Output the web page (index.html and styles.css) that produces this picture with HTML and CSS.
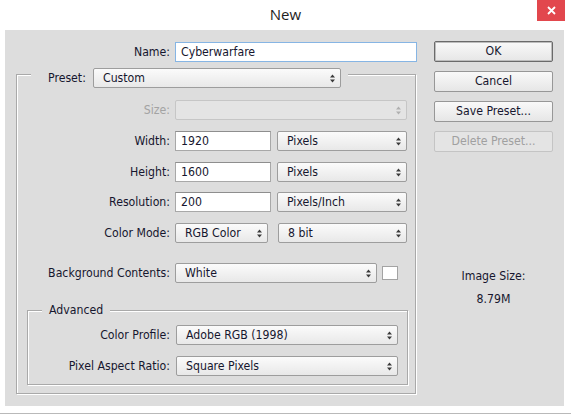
FILE: index.html
```html
<!DOCTYPE html>
<html>
<head>
<meta charset="utf-8">
<title>New</title>
<link rel="stylesheet" href="styles.css">
</head>
<body>
<div class="titlebar">
  <span class="title">New</span>
  <div class="close"><svg width="9" height="9" viewBox="0 0 9 9"><path d="M1 1L8 8M8 1L1 8" stroke="#fff" stroke-width="1.8" fill="none"/></svg></div>
</div>
<div class="dialog">
  <div class="main">
    <div class="namerow">
      <span class="lbl lbl-name">Name:</span>
      <div class="input name">Cyberwarfare</div>
    </div>
    <div class="group">
      <div class="legend preset">
        <span class="lbl">Preset:</span>
        <div class="select w-preset"><span>Custom</span><svg class="arr" width="5" height="9" viewBox="0 0 5 9"><path d="M0 3.5L2.5 0.5L5 3.5ZM0 5.5L5 5.5L2.5 8.5Z"/></svg></div>
      </div>
      <div class="row r-size">
        <span class="lbl dis">Size:</span>
        <div class="select dis w-full"><span></span><svg class="arr" width="5" height="9" viewBox="0 0 5 9"><path d="M0 3.5L2.5 0.5L5 3.5ZM0 5.5L5 5.5L2.5 8.5Z"/></svg></div>
      </div>
      <div class="row r-next">
        <span class="lbl">Width:</span>
        <div class="pair">
          <div class="input w-num">1920</div>
          <div class="select w-unit"><span>Pixels</span><svg class="arr" width="5" height="9" viewBox="0 0 5 9"><path d="M0 3.5L2.5 0.5L5 3.5ZM0 5.5L5 5.5L2.5 8.5Z"/></svg></div>
        </div>
      </div>
      <div class="row r-next">
        <span class="lbl">Height:</span>
        <div class="pair">
          <div class="input w-num">1600</div>
          <div class="select w-unit"><span>Pixels</span><svg class="arr" width="5" height="9" viewBox="0 0 5 9"><path d="M0 3.5L2.5 0.5L5 3.5ZM0 5.5L5 5.5L2.5 8.5Z"/></svg></div>
        </div>
      </div>
      <div class="row r-res">
        <span class="lbl">Resolution:</span>
        <div class="pair">
          <div class="input w-num">200</div>
          <div class="select w-unit"><span>Pixels/Inch</span><svg class="arr" width="5" height="9" viewBox="0 0 5 9"><path d="M0 3.5L2.5 0.5L5 3.5ZM0 5.5L5 5.5L2.5 8.5Z"/></svg></div>
        </div>
      </div>
      <div class="row r-next">
        <span class="lbl">Color Mode:</span>
        <div class="pair pair-cm">
          <div class="select w-mode"><span>RGB Color</span><svg class="arr" width="5" height="9" viewBox="0 0 5 9"><path d="M0 3.5L2.5 0.5L5 3.5ZM0 5.5L5 5.5L2.5 8.5Z"/></svg></div>
          <div class="select w-bit"><span>8 bit</span><svg class="arr" width="5" height="9" viewBox="0 0 5 9"><path d="M0 3.5L2.5 0.5L5 3.5ZM0 5.5L5 5.5L2.5 8.5Z"/></svg></div>
        </div>
      </div>
      <div class="row r-bg">
        <span class="lbl">Background Contents:</span>
        <div class="pair pair-bg">
          <div class="select w-bg"><span>White</span><svg class="arr" width="5" height="9" viewBox="0 0 5 9"><path d="M0 3.5L2.5 0.5L5 3.5ZM0 5.5L5 5.5L2.5 8.5Z"/></svg></div>
          <div class="swatch"></div>
        </div>
      </div>
      <div class="adv">
        <div class="legend adv-legend">Advanced</div>
        <div class="row arow r-cp">
          <span class="lbl">Color Profile:</span>
          <div class="select w-adv"><span>Adobe RGB (1998)</span><svg class="arr" width="5" height="9" viewBox="0 0 5 9"><path d="M0 3.5L2.5 0.5L5 3.5ZM0 5.5L5 5.5L2.5 8.5Z"/></svg></div>
        </div>
        <div class="row arow r-next">
          <span class="lbl">Pixel Aspect Ratio:</span>
          <div class="select w-adv"><span>Square Pixels</span><svg class="arr" width="5" height="9" viewBox="0 0 5 9"><path d="M0 3.5L2.5 0.5L5 3.5ZM0 5.5L5 5.5L2.5 8.5Z"/></svg></div>
        </div>
      </div>
    </div>
  </div>
  <div class="side">
    <div class="btn default">OK</div>
    <div class="btn">Cancel</div>
    <div class="btn">Save Preset...</div>
    <div class="btn disabled">Delete Preset...</div>
    <div class="imgsize">
      <div class="is-label">Image Size:</div>
      <div class="is-value">8.79M</div>
    </div>
  </div>
</div>
<div class="bottomline"></div>
</body>
</html>
```
FILE: styles.css
```css
* { box-sizing: border-box; }
html, body { margin: 0; padding: 0; background: #ffffff; }
body {
  width: 571px;
  height: 414px;
  overflow: hidden;
  font-family: Tahoma, "DejaVu Sans Condensed", "DejaVu Sans", sans-serif;
  font-stretch: condensed;
  font-size: 12.2px;
  color: #16162e;
}

.titlebar {
  height: 30px;
  display: grid;
  grid-template-columns: 1fr auto 1fr;
  align-items: start;
}
.title {
  grid-column: 2;
  font-family: "Open Sans", "Noto Sans", sans-serif;
  font-stretch: normal;
  font-size: 15px;
  line-height: 28px;
  color: #1e1e1e;
}
.close {
  grid-column: 3;
  justify-self: end;
  margin-right: 6px;
  width: 28px;
  height: 21px;
  background: #e2474d;
  display: flex;
  align-items: center;
  justify-content: center;
}

.dialog {
  margin: 0 7px 0 5px;
  height: 376px;
  background: #dddddd;
  display: flex;
  align-items: flex-start;
  padding: 12px 0 0 11px;
}

.main { width: 401px; }

.lbl {
  line-height: 20px;
  white-space: nowrap;
}
.lbl.dis { color: #a3a3a3; }

.namerow {
  display: flex;
  align-items: center;
}
.lbl-name {
  width: 154px;
  text-align: right;
  margin-right: 5px;
}

.input {
  height: 20px;
  background: #ffffff;
  border: 1px solid #a8a8a8;
  border-top-color: #8e8e8e;
  padding: 0 5px;
  line-height: 18px;
  white-space: nowrap;
}
.input.name {
  width: 242px;
  border-color: #86b5e4;
}

.select {
  height: 20px;
  border: 1px solid #9d9d9d;
  border-radius: 2px;
  background: linear-gradient(#fbfbfb, #e8e8e8);
  display: flex;
  align-items: center;
  justify-content: space-between;
  padding: 0 5px 0 9px;
  white-space: nowrap;
}
.select .arr { fill: #3a3a3a; flex: none; }
.select.dis {
  border-color: #c6c6c6;
  background: #e4e4e4;
}
.select.dis .arr { fill: #b0b0b0; }

.group {
  width: 400px;
  margin-top: 12px;
  border: 1px solid #a9a9a9;
  box-shadow: inset 1px 1px 0 #ffffff, 1px 1px 0 #ffffff;
  padding: 0 0 8px 0;
}

.legend {
  background: #dddddd;
  width: fit-content;
}
.preset {
  display: flex;
  align-items: center;
  margin: -7px 0 0 14px;
  padding: 0 7px 0 17px;
}
.preset .lbl { width: 40px; margin-right: 5px; }
.w-preset { width: 248px; }

.row {
  display: flex;
  align-items: center;
}
.row > .lbl {
  width: 153px;
  text-align: right;
  margin-right: 5px;
}
.r-size { margin-top: 12px; }
.r-next { margin-top: 11px; }
.r-res { margin-top: 10px; }
.r-bg { margin-top: 20px; }

.w-full { width: 232px; }
.pair { display: flex; align-items: center; }
.w-num { width: 96px; margin-right: 6px; }
.w-unit { width: 130px; }
.w-mode { width: 93px; margin-right: 10px; }
.w-bit { width: 129px; }
.w-bg { width: 202px; }
.swatch {
  width: 16px;
  height: 14px;
  margin-left: 5px;
  background: #ffffff;
  border: 1px solid #a3a3a3;
}

.adv {
  margin: 27px 7px 0 10px;
  border: 1px solid #a9a9a9;
  box-shadow: inset 1px 1px 0 #ffffff, 1px 1px 0 #ffffff;
  padding-bottom: 8px;
}
.adv-legend {
  margin: -8px 0 0 14px;
  padding: 0 7px;
  line-height: 14px;
  height: 14px;
}
.arow > .lbl {
  width: 142px;
  margin-right: 6px;
}
.r-cp { margin-top: 8px; }
.w-adv { width: 222px; }

.side {
  width: 119px;
  margin-left: 17px;
  margin-top: -1px;
  display: flex;
  flex-direction: column;
}
.btn {
  height: 21px;
  margin-bottom: 9px;
  border: 1px solid #979797;
  border-radius: 2px;
  background: linear-gradient(#f9f9f9, #e6e6e6);
  text-align: center;
  line-height: 19px;
}
.btn.default {
  border-color: #6a6a6a;
  box-shadow: inset 0 0 0 1px #bdbdbd;
}
.btn.disabled {
  color: #a0a0a0;
  border-color: #c4c4c4;
  background: #e4e4e4;
}
.imgsize {
  margin-top: 107px;
  text-align: center;
  line-height: 16px;
}
.is-value { margin-top: 7px; }

.bottomline {
  margin-top: 7px;
  height: 1px;
  background: #b9b9b9;
}
```
